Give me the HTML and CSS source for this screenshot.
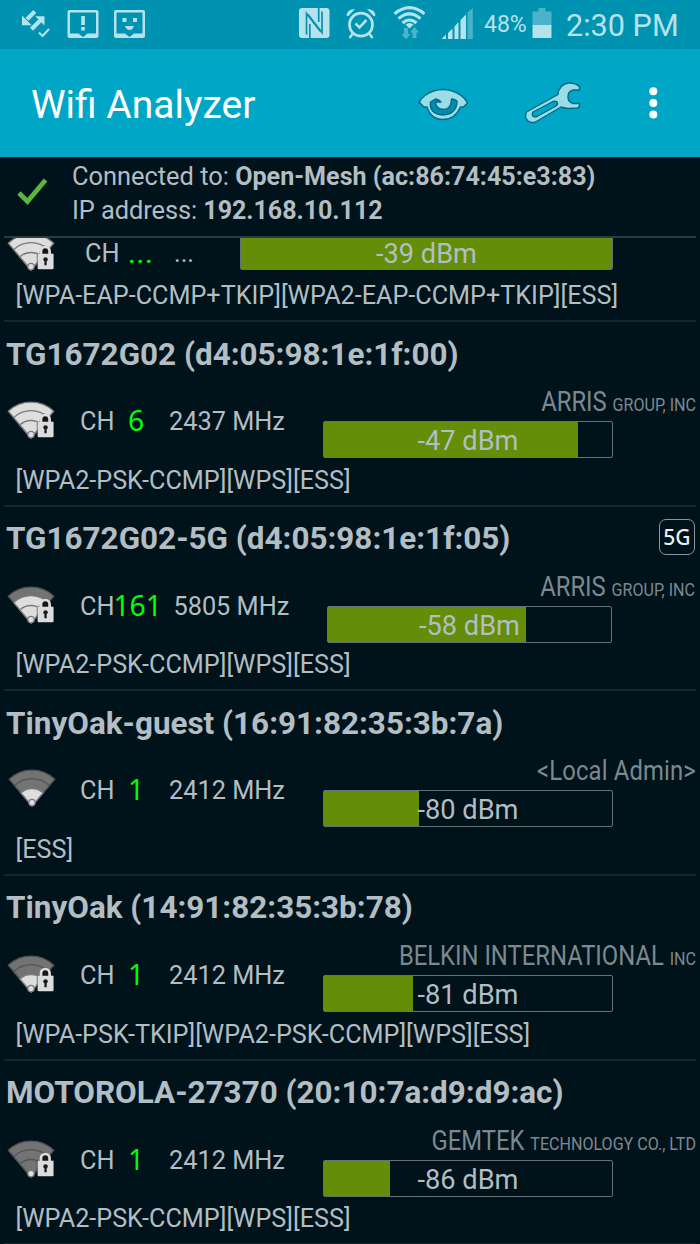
FILE: index.html
```html
<!DOCTYPE html>
<html lang="en">
<head>
<meta charset="utf-8">
<title>Wifi Analyzer</title>
<link rel="stylesheet" href="styles.css">
</head>
<body>
<svg class="defs" width="0" height="0">
  <defs>
    <path id="band4" d="M23 37L.3 10.200A33 33 0 0 1 45.700 10.200Z"/>
    <path id="band3" d="M23 37L5.750 16.600A25 25 0 0 1 40.250 16.600Z"/>
    <path id="band2" d="M23 37L11.900 23.900A16.200 16.200 0 0 1 34.100 23.900Z"/>
    <circle id="dot" cx="23" cy="33.600" r="3.200"/>
    <g id="lock">
      <path d="M28.700 22V35.500H46V20H42Q41 12.500 37 12.500T31.500 20Z" fill="#333b40" opacity=".6"/>
      <path d="M33 21.500V18.300A4.300 4.300 0 0 1 41.600 18.300V21.500" fill="#11191d" stroke="#ddd" stroke-width="2.700"/>
      <rect x="29.700" y="20.700" width="15.800" height="15.600" rx="1" fill="#dcdcdc"/>
      <path d="M35.200 26.200A2.400 2.400 0 0 1 39.900 26.200Q39.800 27.700 38.700 28.300V32.300H36.400V28.300Q35.200 27.700 35.200 26.200Z" fill="#151b1f"/>
    </g>
  </defs>
</svg>

<header class="status">
  <svg class="status-left" width="160" height="49" viewBox="0 0 160 49" fill="#b5e2eb">
    <path d="M34.800 11.500L27 19.300M31.500 29.200L40 20.700" fill="none" stroke="#b5e2eb" stroke-width="4.200"/>
    <path d="M22 15.500V25.200H31.700ZM35.200 16.300H44.500V25.600Z"/>
    <path d="M39 32.500L42.500 36L49 29" fill="none" stroke="#b5e2eb" stroke-width="2"/>
    <path fill-rule="evenodd" d="M69.500 10H96.500Q98.500 10 98.500 12V36Q98.500 38 96.500 38H69.500Q67.500 38 67.500 36V12Q67.500 10 69.500 10ZM70 12.500V33.500H78.500L83 37L87.500 33.500H96V12.500Z"/>
    <rect x="81.200" y="16" width="3.700" height="9"/><rect x="81.200" y="27" width="3.700" height="3.500"/>
    <path fill-rule="evenodd" d="M116 10H143Q145 10 145 12V36Q145 38 143 38H116Q114 38 114 36V12Q114 10 116 10ZM116.500 12.500V33.500H125L129.500 37L134 33.500H142.500V12.500Z"/>
    <rect x="122.500" y="18" width="4" height="4"/><rect x="133" y="18" width="4" height="4"/>
    <path d="M125 26H134Q132.500 30 129.500 30T125 26Z"/>
  </svg>
  <svg class="status-right" width="178" height="49" viewBox="296 0 178 49" fill="#b5e2eb">
    <rect x="299" y="8" width="30.500" height="30" rx="3"/>
    <path d="M306.500 34.500V13.500L320.500 31.500M322 11.500V32.500L308 14.500M309.800 38.500V24M318.700 7.500V22" fill="none" stroke="#0093b1" stroke-width="1.700"/>
    <circle cx="361" cy="24.700" r="11.500" fill="none" stroke="#b5e2eb" stroke-width="2.700"/>
    <path d="M355.500 23.500L359.500 27.500L366.500 20M352.500 34L349.500 38M369.500 34L372.500 38" fill="none" stroke="#b5e2eb" stroke-width="2.600"/>
    <path d="M346.500 15Q347.500 9 355 9L348.500 16Q347 16.500 346.500 15ZM375.500 15Q374.500 9 367 9L373.500 16Q375 16.500 375.500 15Z"/>
    <path d="M394.500 13.800Q409.500 1.500 424.500 13.800M398.500 18.600Q409.500 9.200 420.500 18.600M402.500 23Q409.500 17 416.500 23" fill="none" stroke="#b5e2eb" stroke-width="3"/>
    <path d="M405.500 24.500Q409.500 21.500 413.500 24.500L409.500 28.500Z"/>
    <path d="M404 28H408V34H410.500L406 39.500L401.500 34H404ZM412.500 38H416.500V32.500H419L414.500 27L410 32.500H412.500Z" opacity=".42"/>
    <path d="M441.500 39L446 34.500V39ZM448 33L452.500 28.500V39H448ZM454.500 26.500L458.500 22V39H454.500ZM460.500 20L466 14.500V39H460.500Z"/>
    <path d="M467.500 12.500L472.800 8V39H467.500Z" opacity=".4"/>
  </svg>
  <span class="percent">48%</span>
  <svg class="battery" width="20" height="32" viewBox="0 0 20 32" fill="#b5e2eb">
    <path d="M.5 4.500H6.500V1H13.500V4.500H19.500V18H.5Z" opacity=".42"/><path d="M.5 18H19.500V31H.5Z"/>
  </svg>
  <span class="clock">2:30 PM</span>
</header>

<div class="appbar">
  <h1>Wifi Analyzer</h1>
  <svg class="tools" width="250" height="60" viewBox="410 73 250 60" fill="#9bdce8" stroke="#006c85" stroke-width="1.400" stroke-linejoin="round">
    <path d="M419 103Q421 98 425 95.500Q433 89.500 443 89.500T461 95.500Q466 99 467.500 103L463.500 107H460.500Q455 119.500 443 119.500T427 107H424L419 102Z"/>
    <path d="M430.500 102Q429 114 443 115Q457 114 457 101Q454.500 99 451.500 99Q451.500 109.500 443.500 109.500Q436 109 435.500 102L441 102Q439 99.500 435.500 99Z" fill="#008caa"/>
    <path d="M526.500 112Q524 117 528 121Q531 123.500 535.500 122L561 107Q565 108.500 569 108.500L577.500 108Q580 107 579.500 103.500H573Q568 102 568 97Q568 91 573 90H579.500V86.500Q575 82.500 568 83Q558.500 85 558 94.500Z"/>
    <path d="M533 112L553 101.500Q556 100.500 557.500 102.500Q558 104.500 556 106L537 116.500Q534 117.500 532.500 115.500Q532 113.500 533 112Z" fill="#00a6c6"/>
    <g fill="#fff" stroke="none"><circle cx="653.300" cy="91.300" r="4"/><circle cx="653.300" cy="103" r="4"/><circle cx="653.300" cy="114.600" r="4"/></g>
  </svg>
</div>

<section class="connection">
  <svg class="check" width="32" height="28" viewBox="0 0 32 28"><path d="M2 15L10.500 23.500L28.500 2" fill="none" stroke="#5cb53c" stroke-width="4.800"/></svg>
  <div class="connection-text">
    <p>Connected to: <b>Open-Mesh (ac:86:74:45:e3:83)</b></p>
    <p class="ip">IP address: <b>192.168.10.112</b></p>
  </div>
</section>

<main class="list">
  <article class="ap partial">
    <div class="info">
      <svg class="wifi" viewBox="0 0 47 37"><g class="on"><use href="#band4"/><use href="#band3"/><use href="#band2"/><use href="#dot"/></g><use href="#lock"/></svg>
      <span class="ch">CH</span><span class="num">...</span><span class="freq">...</span>
      <div class="signal"><div class="bar"><i class="fill" style="width:100%"></i><span>-39 dBm</span></div></div>
    </div>
    <p class="caps wide">[WPA-EAP-CCMP+TKIP][WPA2-EAP-CCMP+TKIP][ESS]</p>
  </article>

  <article class="ap">
    <h2><span>TG1672G02 (d4:05:98:1e:1f:00)</span></h2>
    <div class="info">
      <svg class="wifi" viewBox="0 0 47 37"><g class="on"><use href="#band4"/><use href="#band3"/><use href="#band2"/><use href="#dot"/></g><use href="#lock"/></svg>
      <span class="ch">CH</span><span class="num">6</span><span class="freq">2437 MHz</span>
      <div class="signal"><p class="vendor">ARRIS <small>GROUP, INC</small></p><div class="bar"><i class="fill" style="width:88.2%"></i><span>-47 dBm</span></div></div>
    </div>
    <p class="caps">[WPA2-PSK-CCMP][WPS][ESS]</p>
  </article>

  <article class="ap five">
    <h2><span>TG1672G02-5G (d4:05:98:1e:1f:05)</span><em class="badge">5G</em></h2>
    <div class="info">
      <svg class="wifi" viewBox="0 0 47 37"><use class="off" href="#band4"/><g class="on"><use href="#band3"/><use href="#band2"/><use href="#dot"/></g><use href="#lock"/></svg>
      <span class="ch">CH</span><span class="num">161</span><span class="freq">5805 MHz</span>
      <div class="signal"><p class="vendor">ARRIS <small>GROUP, INC</small></p><div class="bar"><i class="fill" style="width:70%"></i><span>-58 dBm</span></div></div>
    </div>
    <p class="caps">[WPA2-PSK-CCMP][WPS][ESS]</p>
  </article>

  <article class="ap">
    <h2><span>TinyOak-guest (16:91:82:35:3b:7a)</span></h2>
    <div class="info">
      <svg class="wifi" viewBox="-1 1 47 37"><g class="off"><use href="#band4"/><use href="#band3"/></g><g class="on"><use href="#band2"/><use href="#dot"/></g></svg>
      <span class="ch">CH</span><span class="num">1</span><span class="freq">2412 MHz</span>
      <div class="signal"><p class="vendor local">&lt;Local Admin&gt;</p><div class="bar"><i class="fill" style="width:33%"></i><span>-80 dBm</span></div></div>
    </div>
    <p class="caps">[ESS]</p>
  </article>

  <article class="ap">
    <h2><span>TinyOak (14:91:82:35:3b:78)</span></h2>
    <div class="info">
      <svg class="wifi" viewBox="0 0 47 37"><g class="off"><use href="#band4"/><use href="#band3"/></g><g class="on"><use href="#band2"/><use href="#dot"/></g><use href="#lock"/></svg>
      <span class="ch">CH</span><span class="num">1</span><span class="freq">2412 MHz</span>
      <div class="signal"><p class="vendor">BELKIN INTERNATIONAL <small>INC</small></p><div class="bar"><i class="fill" style="width:30.9%"></i><span>-81 dBm</span></div></div>
    </div>
    <p class="caps">[WPA-PSK-TKIP][WPA2-PSK-CCMP][WPS][ESS]</p>
  </article>

  <article class="ap">
    <h2><span>MOTOROLA-27370 (20:10:7a:d9:d9:ac)</span></h2>
    <div class="info">
      <svg class="wifi" viewBox="0 0 47 37"><g class="off"><use href="#band4"/><use href="#band3"/><use href="#band2"/></g><use class="on" href="#dot"/><use href="#lock"/></svg>
      <span class="ch">CH</span><span class="num">1</span><span class="freq">2412 MHz</span>
      <div class="signal"><p class="vendor">GEMTEK <small>TECHNOLOGY CO., LTD</small></p><div class="bar"><i class="fill" style="width:23%"></i><span>-86 dBm</span></div></div>
    </div>
    <p class="caps">[WPA2-PSK-CCMP][WPS][ESS]</p>
  </article>
</main>
</body>
</html>
```
FILE: styles.css
```css
* { box-sizing: border-box; }
body {
  margin: 0;
  width: 700px;
  height: 1244px;
  overflow: hidden;
  background: #00131b;
  color: #b2bec4;
  font-family: Roboto, sans-serif;
  display: flex;
  flex-direction: column;
}
h1, h2, p { margin: 0; font-weight: 400; white-space: nowrap; }
.defs { display: none; }

.status {
  height: 49px;
  flex: none;
  display: flex;
  align-items: center;
  background: #0093b1;
  color: #b5e2eb;
}
.status-right { margin-left: 136px; }
.percent { width: 58px; padding-left: 10px; font-size: 23px; line-height: 48px; padding-top: 1px; }
.battery { margin-top: -3px; }
.clock { margin-left: 14px; font-size: 30.600px; padding-top: 1px; white-space: nowrap; }

.appbar {
  height: 108px;
  flex: none;
  display: flex;
  align-items: center;
  background: #00a6c6;
}
.appbar h1 { width: 410px; padding-left: 31px; padding-top: 3px; font-size: 39px; line-height: 46px; color: #fff; }

.connection {
  height: 81px;
  flex: none;
  display: flex;
  padding-left: 16px;
  margin-left: 4px;
  margin-right: 4px;
  border-bottom: 2px solid #2b3940;
}
.check { margin: 21px 24px 0 -3px; }
.connection-text { padding-top: 2px; margin-left: -1px; font-size: 25.400px; line-height: 34px; }
.connection-text b { font-weight: 700; font-size: 25.100px; }
.connection-text .ip { line-height: 33px; letter-spacing: -.07px; }

.list { flex: 1; overflow: hidden; }
.ap { height: 184.67px; display: flex; flex-direction: column; position: relative; }
.ap::after { content: ""; position: absolute; left: 4px; right: 4px; bottom: -1px; height: 2px; background: #14272e; }
.ap h2 {
  height: 64px;
  padding: 2px 5px 0 6px;
  display: flex;
  align-items: center;
  justify-content: space-between;
  font-size: 31.450px;
  font-weight: 700;
}
.badge {
  width: 36px;
  height: 36px;
  margin-top: -3px;
  border: 1.500px solid #8b969b;
  border-radius: 7px;
  font: 500 21px/34px "Noto Sans", sans-serif;
  text-align: center;
  color: #eceff0;
}
.info { height: 69.670px; display: flex; padding-left: 8px; line-height: 73px; font-size: 25.300px; }
.wifi { width: 47px; height: 37px; margin-top: 16px; flex: none; overflow: visible; }
.on { fill: #dedede; stroke: #777c7f; stroke-width: 1.300px; }
.off { fill: #737373; stroke: #505456; stroke-width: 1.300px; }
.ch { width: 33px; margin-left: 25px; }
.num { width: 46px; text-align: center; font-family: "Noto Sans", sans-serif; font-size: 28.300px; line-height: 70px; color: #00ff04; }
.freq { width: 154px; margin-left: 10px; white-space: nowrap; }
.signal { width: 373px; flex: none; }
.vendor {
  height: 36px;
  line-height: 34px;
  text-align: right;
  font-size: 27.700px;
  color: #7c898f;
  transform: scaleX(.86);
  transform-origin: right;
}
.vendor small { font-size: 18.700px; }
.local { letter-spacing: .2px; }
.bar {
  position: relative;
  width: 290px;
  height: 37px;
  border: 1px solid #667178;
  border-radius: 2px;
  font-size: 27.200px;
  line-height: 38px;
  text-align: center;
}
.bar .fill { position: absolute; left: 0; top: 0; bottom: 0; background: #648e08; }
.bar span { position: relative; }
.caps { height: 51px; padding-left: 15.500px; line-height: 51px; font-size: 25.200px; }

.five .num { width: 58px; margin-left: -4px; }
.five .freq { margin-left: 7px; width: 155px; }
.five .bar { width: 285px; }
.five .vendor { margin-right: 5px; }

.partial { height: 83px; }
.partial .info { height: 32px; line-height: 32px; align-items: flex-end; }
.partial .ch { margin-left: 30px; }
.partial .num { font-family: Roboto, sans-serif; font-size: 26px; line-height: 32px; letter-spacing: 1.200px; font-weight: 500; }
.partial .freq { width: 66px; }
.partial .bar { width: 373px; line-height: 40px; }
```
